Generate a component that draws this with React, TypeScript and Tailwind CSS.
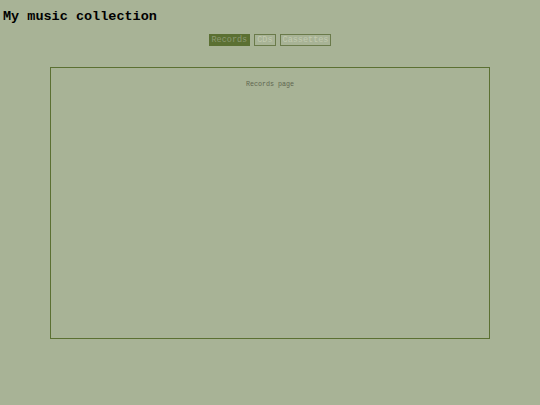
import React from "react";

export default function App() {
  const mono = { fontFamily: '"Liberation Mono", "DejaVu Sans Mono", monospace' };
  return (
    <div className="w-[540px] h-[405px] bg-[#a8b396] overflow-hidden" style={mono}>
      <h1 className="text-[13.5px] font-bold leading-[16px] text-black pl-[3px] pt-[9px]">My music collection</h1>
      <div className="flex justify-center gap-[4px] mt-[9px]">
        <button className="text-[8.5px] leading-[8px] px-[2px] py-px border border-[#5b7032] bg-[#5b7032] text-[#8d9a72]" style={mono}>Records</button>
        <button className="text-[8.5px] leading-[8px] px-[2px] py-px border border-[#6a7a4a] text-[#c2cab0]" style={mono}>CDs</button>
        <button className="text-[8.5px] leading-[8px] px-[2px] py-px border border-[#6a7a4a] text-[#c2cab0]" style={mono}>Cassettes</button>
      </div>
      <div className="mx-auto mt-[21px] w-[440px] h-[272px] border border-[#5b7032] flex justify-center pt-[12px]">
        <p className="text-[6.7px] leading-[8px] text-[#5f6650]">Records page</p>
      </div>
    </div>
  );
}
